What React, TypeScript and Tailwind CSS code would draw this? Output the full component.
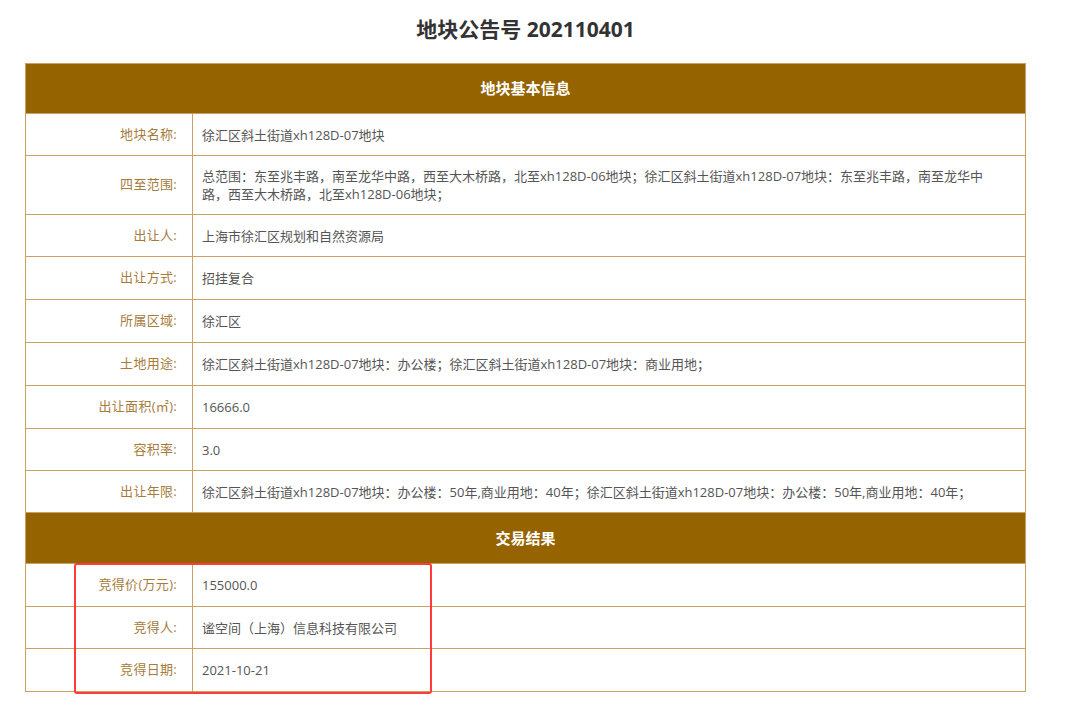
import React from "react";

// Types
interface Row {
  label: string;
  value: string;
  h: string;
}

const basicRows: Row[] = [
  { label: "地块名称:", value: "徐汇区斜土街道xh128D-07地块", h: "h-[42px]" },
  {
    label: "四至范围:",
    value:
      "总范围：东至兆丰路，南至龙华中路，西至大木桥路，北至xh128D-06地块；徐汇区斜土街道xh128D-07地块：东至兆丰路，南至龙华中路，西至大木桥路，北至xh128D-06地块；",
    h: "h-[59px]",
  },
  { label: "出让人:", value: "上海市徐汇区规划和自然资源局", h: "h-[42px]" },
  { label: "出让方式:", value: "招挂复合", h: "h-[43px]" },
  { label: "所属区域:", value: "徐汇区", h: "h-[43px]" },
  { label: "土地用途:", value: "徐汇区斜土街道xh128D-07地块：办公楼；徐汇区斜土街道xh128D-07地块：商业用地；", h: "h-[43px]" },
  { label: "出让面积(㎡):", value: "16666.0", h: "h-[43px]" },
  { label: "容积率:", value: "3.0", h: "h-[42px]" },
  {
    label: "出让年限:",
    value: "徐汇区斜土街道xh128D-07地块：办公楼：50年,商业用地：40年；徐汇区斜土街道xh128D-07地块：办公楼：50年,商业用地：40年；",
    h: "h-[42px]",
  },
];

const resultRows: Row[] = [
  { label: "竞得价(万元):", value: "155000.0", h: "h-[43px]" },
  { label: "竞得人:", value: "谧空间（上海）信息科技有限公司", h: "h-[42px]" },
  { label: "竞得日期:", value: "2021-10-21", h: "h-[43px]" },
];

const SectionHead = ({ title, h }: { title: string; h: string }) => (
  <div className={`flex ${h} items-center justify-center border-b border-[#c9a261] bg-[#956300] text-[15px] font-bold text-white`}>
    {title}
  </div>
);

const InfoRow = ({ row }: { row: Row }) => (
  <div className={`grid grid-cols-[167px_1fr] border-b border-[#c9a261] ${row.h}`}>
    <div className="flex items-center justify-end border-r border-[#c9a261] pr-[15px] text-[#a67c3c]">
      <span className="tracking-[0.3px]">{row.label}</span>
    </div>
    <div className="flex items-center pl-[9px] pr-[18px] leading-[18px] text-[#555]">{row.value}</div>
  </div>
);

const App = () => {
  return (
    <div
      className="min-h-[709px] bg-white text-[13px]"
      style={{ fontFamily: '"Open Sans", "Noto Sans CJK SC", sans-serif' }}
    >
      <div className="ml-[25px] w-[1001px]">
        <h1 className="pt-[15px] text-center text-[21px] font-bold leading-[29px] text-[#333]">
          地块公告号 202110401
        </h1>

        <div className="relative mt-[19px] border-x border-t border-[#c9a261]">
          <SectionHead title="地块基本信息" h="h-[50px]" />
          {basicRows.map((r) => (
            <InfoRow key={r.label} row={r} />
          ))}
          <SectionHead title="交易结果" h="h-[51px]" />
          {resultRows.map((r) => (
            <InfoRow key={r.label} row={r} />
          ))}

          {/* red highlight box */}
          <div className="pointer-events-none absolute left-[48px] top-[499px] h-[131px] w-[358px] rounded-[3px] border-2 border-[#ff3b3b]" />
        </div>
      </div>
    </div>
  );
};

export default App;
